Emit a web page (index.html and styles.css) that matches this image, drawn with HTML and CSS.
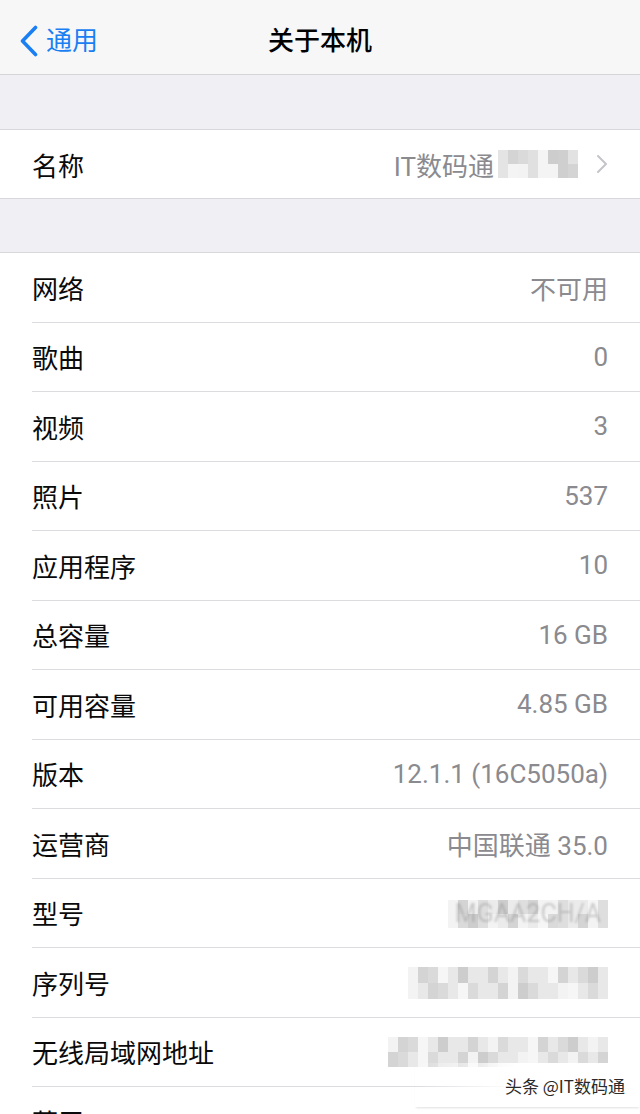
FILE: index.html
```html
<!DOCTYPE html>
<html>
<head>
  <meta charset="utf-8" />
  <title>关于本机</title>
  <meta name="viewport" content="width=device-width, initial-scale=1.0">
  <link rel="stylesheet" href="styles.css">
</head>
<body>
  <div class="screen">
    <!-- Navigation bar -->
    <div class="navbar">
      <a class="back">
        <svg width="20" height="32" viewBox="0 0 20 32"><path d="M16.5 2.5 L3.5 16 L16.5 29.5" fill="none" stroke="#1a7ff2" stroke-width="3.6" stroke-linecap="round" stroke-linejoin="round"/></svg>
        <span>通用</span>
      </a>
      <div class="title">关于本机</div>
    </div>

    <!-- Name -->
    <div class="group first">
      <div class="row name">
        <span class="label">名称</span>
        <span class="value">IT数码通<span class="mosaic m-name"><i></i><i></i><i></i><i></i><i></i><i></i><i></i><i></i><i></i><i></i><i></i><i></i><i></i><i></i><i></i><i></i></span></span>
        <svg class="chevron" width="12" height="20" viewBox="0 0 12 20"><path d="M2 2 L10 10 L2 18" fill="none" stroke="#c4c4c9" stroke-width="2" stroke-linecap="round" stroke-linejoin="round"/></svg>
      </div>
    </div>

    <!-- Info -->
    <div class="group second">
      <div class="row"><span class="label">网络</span><span class="value">不可用</span></div>
      <div class="row"><span class="label">歌曲</span><span class="value">0</span></div>
      <div class="row"><span class="label">视频</span><span class="value">3</span></div>
      <div class="row"><span class="label">照片</span><span class="value">537</span></div>
      <div class="row"><span class="label">应用程序</span><span class="value">10</span></div>
      <div class="row"><span class="label">总容量</span><span class="value">16 GB</span></div>
      <div class="row"><span class="label">可用容量</span><span class="value">4.85 GB</span></div>
      <div class="row"><span class="label">版本</span><span class="value">12.1.1 (16C5050a)</span></div>
      <div class="row"><span class="label">运营商</span><span class="value">中国联通 35.0</span></div>
      <div class="row"><span class="label">型号</span>
        <span class="mosaic m-model"><i></i><i></i><i></i><i></i><i></i><i></i><i></i><i></i><i></i><i></i><i></i><i></i><i></i><i></i><i></i><i></i><i></i><i></i><i></i><i></i><i></i><i></i><i></i><i></i><i></i><i></i><i></i><i></i><i></i><i></i><i></i><i></i><b>MGAA2CH/A</b></span>
      </div>
      <div class="row"><span class="label">序列号</span>
        <span class="mosaic m-serial"><i></i><i></i><i></i><i></i><i></i><i></i><i></i><i></i><i></i><i></i><i></i><i></i><i></i><i></i><i></i><i></i><i></i><i></i><i></i><i></i><i></i><i></i><i></i><i></i><i></i><i></i><i></i><i></i><i></i><i></i><i></i><i></i><i></i><i></i><i></i><i></i><i></i><i></i><i></i><i></i></span>
      </div>
      <div class="row"><span class="label">无线局域网地址</span>
        <span class="mosaic m-wifi"><i></i><i></i><i></i><i></i><i></i><i></i><i></i><i></i><i></i><i></i><i></i><i></i><i></i><i></i><i></i><i></i><i></i><i></i><i></i><i></i><i></i><i></i><i></i><i></i><i></i><i></i><i></i><i></i><i></i><i></i><i></i><i></i><i></i><i></i><i></i><i></i><i></i><i></i><i></i><i></i><i></i><i></i><i></i><i></i></span>
      </div>
      <div class="row"><span class="label">蓝牙</span><span class="value"></span></div>
    </div>

    <div class="watermark">头条 @IT数码通</div>
  </div>
</body>
</html>
```

FILE: styles.css
```css
body {
  margin: 0;
  background: #efeff4;
  font-family: Roboto, "Noto Sans CJK SC", sans-serif;
}
.screen {
  position: relative;
  width: 640px;
  height: 1114px;
  overflow: hidden;
  background: #efeff4;
}
.navbar {
  position: relative;
  height: 75px;
  box-sizing: border-box;
  background: #f7f7f8;
  border-bottom: 1px solid #d4d4d8;
  display: flex;
  align-items: center;
  justify-content: center;
}
.back {
  position: absolute;
  left: 19px;
  top: 25px;
  display: flex;
  align-items: center;
  gap: 7px;
  color: #1a7ff2;
  font-size: 26px;
  line-height: 32px;
}
.title {
  font-size: 26px;
  font-weight: 500;
  color: #000;
  margin-top: 2px;
}
.group {
  background: #fff;
  border-top: 1px solid #d8d8dc;
  border-bottom: 1px solid #d8d8dc;
}
.group.first {
  margin-top: 54px;
}
.group.second {
  margin-top: 53px;
}
.row {
  display: flex;
  align-items: center;
  justify-content: space-between;
  height: 69.5px;
  box-sizing: border-box;
  margin-left: 32px;
  padding-right: 32px;
  border-bottom: 1px solid #dcdce0;
}
.row:last-child {
  border-bottom: none;
}
.row.name {
  height: 68px;
  padding-right: 32px;
}
.label {
  font-size: 26px;
  color: #0a0a0a;
}
.value {
  font-size: 26px;
  color: #8a8a8f;
  display: flex;
  align-items: center;
}
.name .value {
  margin-left: auto;
  margin-right: 18px;
}
.chevron {
  display: block;
}

/* blurred values */
.mosaic {
  position: relative;
  display: grid;
  background: #ececec;
}
.mosaic i {
  display: block;
  background: #e8e8e8;
}
.mosaic i:nth-child(3n) { background: #dadada; }
.mosaic i:nth-child(5n+1) { background: #f3f3f3; }
.mosaic i:nth-child(7n+2) { background: #d4d4d4; }
.mosaic i:nth-child(11n+4) { background: #f6f6f6; }
.mosaic i:nth-child(13n+6) { background: #cdcdcd; }
.mosaic b {
  position: absolute;
  left: 0;
  right: 0;
  top: 0;
  text-align: center;
  font-weight: normal;
  font-size: 25px;
  line-height: 28px;
  color: rgba(140, 140, 140, 0.4);
  filter: blur(1px);
}
.m-name {
  grid-template-columns: repeat(8, 10px);
  grid-auto-rows: 14px;
  margin-left: 4px;
  background: #f2f2f2;
}
.m-name i { background: #f4f4f4; }
.m-name i:nth-child(1), .m-name i:nth-child(9) { background: #e4e4e4; }
.m-name i:nth-child(4), .m-name i:nth-child(12) { background: #e0e0e0; }
.m-name i:nth-child(7), .m-name i:nth-child(15) { background: #cfcfcf; }
.m-name i:nth-child(8) { background: #e2e2e2; }
.m-model {
  grid-template-columns: repeat(16, 10px);
  grid-auto-rows: 14px;
  margin-top: 2px;
}
.m-model i { background: #ebebeb; }
.m-model i:nth-child(4n) { background: #dedede; }
.m-model i:nth-child(7n+3) { background: #f3f3f3; }
.m-serial {
  grid-template-columns: repeat(20, 10px);
  grid-auto-rows: 16px;
  margin-top: 2px;
}
.m-wifi {
  grid-template-columns: repeat(22, 10px);
  grid-auto-rows: 15px;
}

.watermark {
  position: absolute;
  right: 0;
  bottom: 7px;
  padding: 10px 15px 9px 90px;
  font-size: 17px;
  color: #2a2a2a;
  font-family: "Noto Sans CJK SC", sans-serif;
  background: linear-gradient(to right, rgba(255, 255, 255, 0), #fff 45%);
  box-shadow: 0 2px 2px -1px rgba(0, 0, 0, 0.12);
}
```
